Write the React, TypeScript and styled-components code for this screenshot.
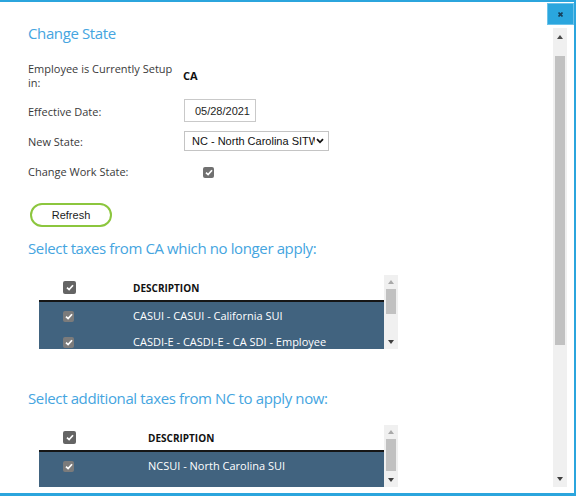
import React from 'react';
import styled, { createGlobalStyle } from 'styled-components';

const GlobalStyle = createGlobalStyle`
  html, body {
    margin: 0;
    padding: 0;
    background: #ffffff;
  }
  body {
    font-family: "Open Sans", "Liberation Sans", sans-serif;
  }
`;

type Tax = { code: string };

const oldTaxes: Tax[] = [
  { code: 'CASUI - CASUI - California SUI' },
  { code: 'CASDI-E - CASDI-E - CA SDI - Employee' },
];

const newTaxes: Tax[] = [{ code: 'NCSUI - North Carolina SUI' }];

function CheckMark() {
  return (
    <svg width="8" height="7" viewBox="0 0 8 7">
      <path d="M1 3.6 L3.1 5.6 L7 1.2" fill="none" stroke="#ffffff" strokeWidth="1.7" />
    </svg>
  );
}

function Scroller({
  upH,
  thumbTop,
  thumbH,
  downH,
  upColor,
}: {
  upH: number;
  thumbTop: number;
  thumbH: number;
  downH: number;
  upColor: string;
}) {
  return (
    <ScrollTrack>
      <ScrollArrow $h={upH}>
        <Triangle $dir="up" $color={upColor} />
      </ScrollArrow>
      <ScrollThumb $offset={thumbTop} $h={thumbH} />
      <Spacer />
      <ScrollArrow $h={downH}>
        <Triangle $dir="down" $color="#3f3f3f" />
      </ScrollArrow>
    </ScrollTrack>
  );
}

function TaxGrid({
  taxes,
  height,
  descStart,
  thumbH,
}: {
  taxes: Tax[];
  height: number;
  descStart: number;
  thumbH: number;
}) {
  return (
    <Grid $height={height}>
      <GridMain>
        <GridHeader>
          <CheckCell $width={descStart}>
            <CheckBox $size={13} $tone="#646464">
              <CheckMark />
            </CheckBox>
          </CheckCell>
          <HeaderText>DESCRIPTION</HeaderText>
        </GridHeader>
        <GridRows>
          {taxes.map((t) => (
            <GridRow key={t.code}>
              <CheckCell $width={descStart}>
                <CheckBox $size={11} $tone="#7b7b7b" $drop={2}>
                  <CheckMark />
                </CheckBox>
              </CheckCell>
              <span>{t.code}</span>
            </GridRow>
          ))}
        </GridRows>
      </GridMain>
      <Scroller upH={14} thumbTop={0} thumbH={thumbH} downH={15} upColor="#a9a9a9" />
    </Grid>
  );
}

function App() {
  return (
    <>
      <GlobalStyle />
      <Window>
        <CloseButton aria-label="close">
          <svg width="5" height="5" viewBox="0 0 5 5">
            <path d="M0.5 0.5 L4.5 4.5 M4.5 0.5 L0.5 4.5" stroke="#163f5a" strokeWidth="1.6" />
          </svg>
        </CloseButton>
        <Content>
          <Title>Change State</Title>

          <FieldRow $top={19}>
            <Label>
              Employee is Currently Setup
              <br />
              in:
            </Label>
            <StrongValue>CA</StrongValue>
          </FieldRow>

          <FieldRow $top={9}>
            <Label $shift={2}>Effective Date:</Label>
            <DateInput readOnly defaultValue="05/28/2021" />
          </FieldRow>

          <FieldRow $top={9}>
            <Label $shift={1}>New State:</Label>
            <SelectBox>
              <SelectText>NC - North Carolina SITW</SelectText>
              <svg width="8" height="6" viewBox="0 0 8 6">
                <path d="M1 1.2 L4 4.3 L7 1.2" fill="none" stroke="#111111" strokeWidth="1.8" />
              </svg>
            </SelectBox>
          </FieldRow>

          <FieldRow $top={14}>
            <Label>Change Work State:</Label>
            <CheckBox $size={11} $tone="#707070" $left={20} $drop={1}>
              <CheckMark />
            </CheckBox>
          </FieldRow>

          <RefreshButton>Refresh</RefreshButton>

          <Heading $top={11}>Select taxes from CA which no longer apply:</Heading>
          <GridWrap $top={17}>
            <TaxGrid taxes={oldTaxes} height={74} descStart={94} thumbH={25} />
          </GridWrap>

          <Heading $top={39}>Select additional taxes from NC to apply now:</Heading>
          <GridWrap $top={17}>
            <TaxGrid taxes={newTaxes} height={62} descStart={109} thumbH={32} />
          </GridWrap>
        </Content>
        <PageScroll>
          <Scroller upH={17} thumbTop={11} thumbH={289} downH={16} upColor="#4a4a4a" />
        </PageScroll>
      </Window>
    </>
  );
}

export default App;

const Window = styled.div`
  position: relative;
  width: 576px;
  height: 496px;
  box-sizing: border-box;
  border-top: 2px solid #2ba5dd;
  border-right: 2px solid #2ba5dd;
  border-bottom: 3px solid #2ba5dd;
  background: #ffffff;
  display: flex;
  overflow: hidden;
`;

const CloseButton = styled.button`
  position: absolute;
  top: 1px;
  right: 0;
  width: 27px;
  height: 22px;
  padding: 0;
  box-sizing: border-box;
  background: #2aa6de;
  border: 1px solid #6cc3ea;
  display: flex;
  align-items: center;
  justify-content: center;
  cursor: pointer;
`;

const Content = styled.div`
  flex: 1;
  min-width: 0;
  padding: 21px 0 0 28px;
  overflow: hidden;
  color: #383838;
`;

const PageScroll = styled.div`
  display: flex;
  margin: 26px 7px 6px 0;
`;

const Title = styled.h2`
  margin: 0;
  font-size: 15px;
  line-height: 20px;
  font-weight: 400;
  letter-spacing: -0.38px;
  color: #45a5df;
`;

const Heading = styled.h3<{ $top: number }>`
  margin: ${(p) => p.$top}px 0 0;
  font-size: 15px;
  line-height: 20px;
  font-weight: 400;
  letter-spacing: -0.38px;
  color: #45a5df;
`;

const FieldRow = styled.div<{ $top: number }>`
  display: flex;
  align-items: center;
  margin-top: ${(p) => p.$top}px;
`;

const Label = styled.div<{ $shift?: number }>`
  width: 155px;
  flex: none;
  font-size: 11px;
  line-height: 14px;
  color: #3a3a3a;
  padding-top: ${(p) => p.$shift ?? 0}px;
`;

const StrongValue = styled.div`
  font-size: 11px;
  line-height: 14px;
  font-weight: 700;
  color: #111111;
`;

const DateInput = styled.input`
  width: 72px;
  height: 23px;
  box-sizing: border-box;
  margin: 0 0 0 1px;
  border: 1px solid #c9c9c9;
  padding: 0 5px 0 0;
  text-align: right;
  font-family: "Liberation Sans", Arial, sans-serif;
  font-size: 11px;
  color: #1e1e1e;
  outline: none;
`;

const SelectBox = styled.div`
  width: 145px;
  height: 20px;
  box-sizing: border-box;
  margin-left: 1px;
  border: 1px solid #c4c4c4;
  display: flex;
  align-items: center;
  padding: 0 4px 0 7px;
  gap: 1px;
  svg {
    flex: none;
  }
`;

const SelectText = styled.span`
  flex: 1;
  overflow: hidden;
  white-space: nowrap;
  font-family: "Liberation Sans", Arial, sans-serif;
  font-size: 11px;
  color: #111111;
`;

const CheckBox = styled.span<{ $size: number; $tone: string; $left?: number; $drop?: number }>`
  display: inline-flex;
  align-items: center;
  justify-content: center;
  flex: none;
  width: ${(p) => p.$size}px;
  height: ${(p) => p.$size}px;
  margin-left: ${(p) => p.$left ?? 0}px;
  margin-top: ${(p) => p.$drop ?? 0}px;
  background: ${(p) => p.$tone};
  border-radius: 2px;
`;

const RefreshButton = styled.button`
  display: block;
  margin: 24px 0 0 2px;
  width: 82px;
  height: 24px;
  box-sizing: border-box;
  background: #ffffff;
  border: 2px solid #8cc63e;
  border-radius: 12px;
  font-family: "Liberation Sans", Arial, sans-serif;
  font-size: 11px;
  color: #1c1c1c;
  padding: 0;
  cursor: pointer;
`;

const GridWrap = styled.div<{ $top: number }>`
  margin: ${(p) => p.$top}px 0 0 11px;
`;

const Grid = styled.div<{ $height: number }>`
  display: flex;
  height: ${(p) => p.$height}px;
`;

const GridMain = styled.div`
  width: 345px;
  display: flex;
  flex-direction: column;
`;

const GridHeader = styled.div`
  height: 25px;
  flex: none;
  display: flex;
  align-items: center;
  border-bottom: 2px solid #161616;
`;

const CheckCell = styled.div<{ $width: number }>`
  width: ${(p) => p.$width}px;
  flex: none;
  box-sizing: border-box;
  padding-left: 24px;
  display: flex;
  align-items: center;
`;

const HeaderText = styled.span`
  font-size: 10px;
  font-weight: 700;
  color: #111111;
`;

const GridRows = styled.div`
  flex: 1;
  overflow: hidden;
  background: #41637f;
`;

const GridRow = styled.div`
  height: 26px;
  display: flex;
  align-items: center;
  color: #ffffff;
  font-size: 11px;
  white-space: nowrap;
`;

const ScrollTrack = styled.div`
  width: 14px;
  display: flex;
  flex-direction: column;
  background: #f0f0f0;
`;

const ScrollArrow = styled.div<{ $h: number }>`
  height: ${(p) => p.$h}px;
  flex: none;
  display: flex;
  align-items: center;
  justify-content: center;
`;

const ScrollThumb = styled.div<{ $offset: number; $h: number }>`
  flex: none;
  margin: ${(p) => p.$offset}px 2px 0;
  height: ${(p) => p.$h}px;
  background: #c1c1c1;
`;

const Spacer = styled.div`
  flex: 1;
`;

const Triangle = styled.span<{ $dir: 'up' | 'down'; $color: string }>`
  width: 0;
  height: 0;
  border-left: 3px solid transparent;
  border-right: 3px solid transparent;
  ${(p) =>
    p.$dir === 'up'
      ? `border-bottom: 4px solid ${p.$color};`
      : `border-top: 4px solid ${p.$color};`}
`;
